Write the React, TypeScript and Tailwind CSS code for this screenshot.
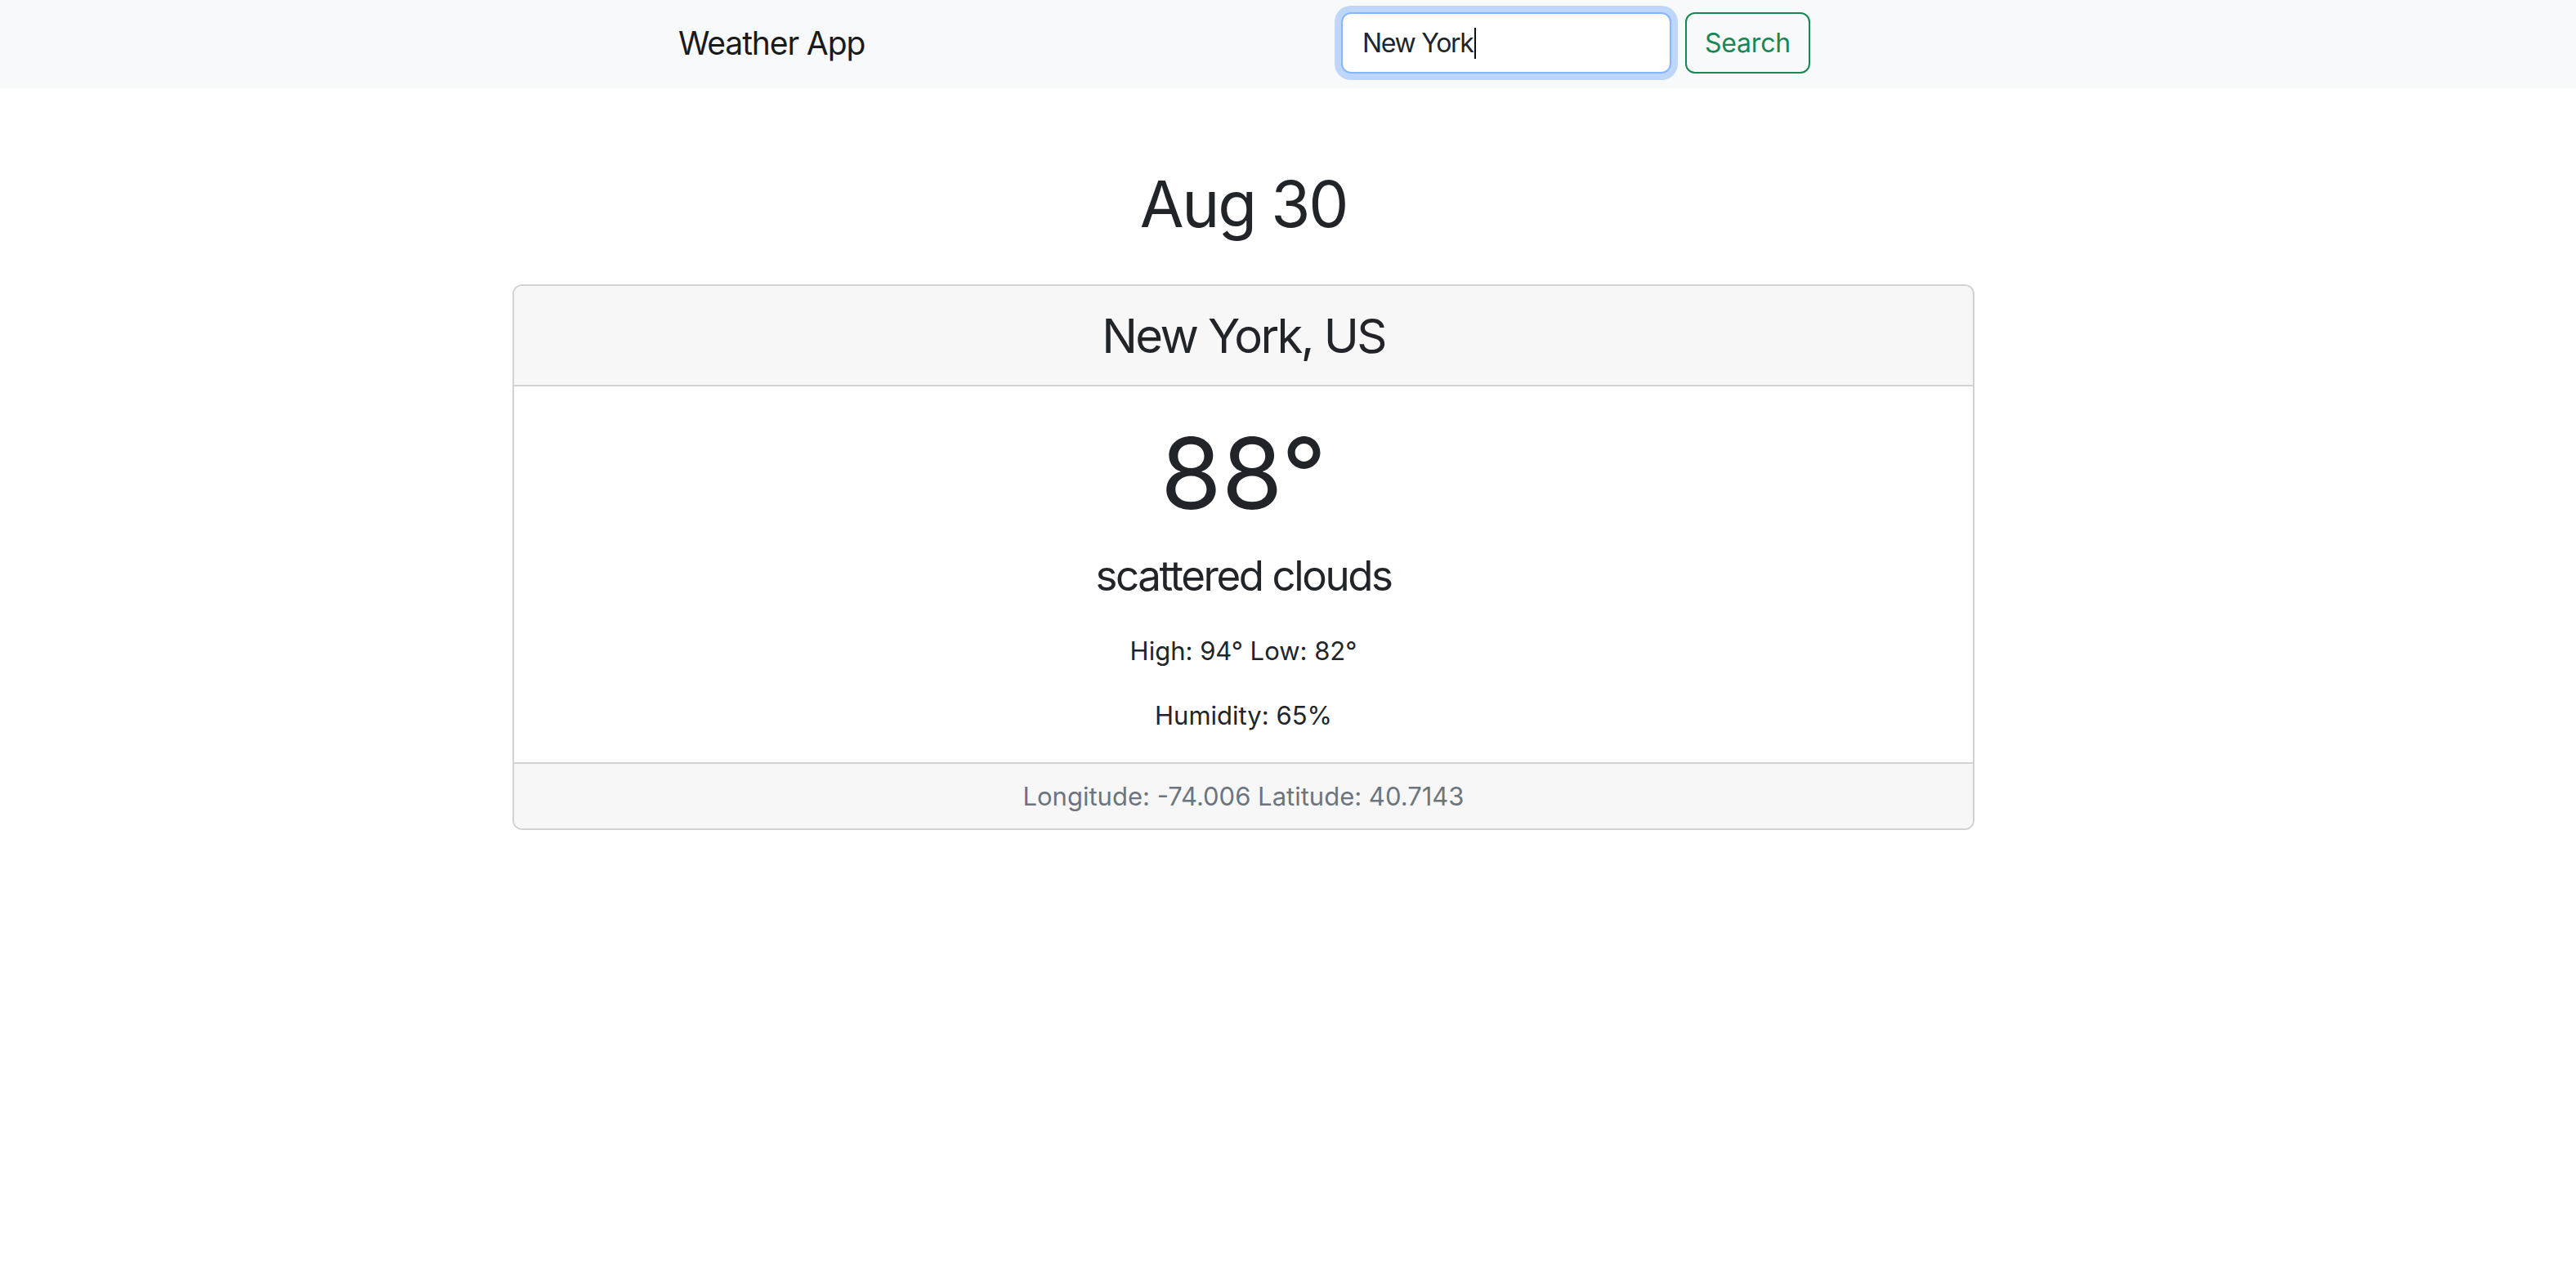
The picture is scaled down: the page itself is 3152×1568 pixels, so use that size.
import React from "react";

export default function App() {
  return (
    <div
      className="min-h-screen w-full bg-white text-[#212529]"
      style={{ fontFamily: "Inter, 'Noto Sans', sans-serif" }}
    >
      <nav className="flex h-[108px] items-start bg-[#f8f9fa] pl-[830px] pt-[15px]">
        <div className="w-[811px] pt-[8px] text-[39px] leading-[60px] tracking-[-1.1px] text-[#1a1a1a]">
          Weather App
        </div>
        <form className="flex items-start gap-[17px]" onSubmit={(e) => e.preventDefault()}>
          <div className="flex h-[75px] w-[404px] items-center rounded-[12px] border-2 border-[#86b7fe] bg-white pl-[24px] text-[32px] leading-[48px] tracking-[-1.3px] text-[#212529] shadow-[0_0_0_8px_rgba(13,110,253,0.25)]">
            <span>New York</span>
            <span className="ml-[1px] inline-block h-[38px] w-[2px] bg-[#111111]" />
          </div>
          <button
            type="submit"
            className="flex h-[75px] w-[153px] items-center justify-center rounded-[12px] border-2 border-[#198754] bg-transparent text-[32px] leading-[48px] tracking-[-0.2px] text-[#198754]"
          >
            Search
          </button>
        </form>
      </nav>

      <main className="ml-[627px] flex w-[1789px] flex-col items-center pt-[95px]">
        <h1 className="mb-[51px] h-[94px] text-[78px] font-normal leading-[94px] tracking-[-2.3px]">
          Aug 30
        </h1>

        <div className="w-full overflow-hidden rounded-[12px] border-2 border-[#d2d2d2]">
          <div className="flex h-[123px] justify-center border-b-2 border-[#d2d2d2] bg-[#f7f7f7] pt-[23px]">
            <h2 className="text-[58px] font-normal leading-[77px] tracking-[-2.6px]">New York, US</h2>
          </div>

          <div className="flex flex-col items-center pb-[33px] pt-[34px]">
            <div className="text-[121px] font-normal leading-[145px]">88°</div>
            <div className="mt-[20px] text-[51px] leading-[66px] tracking-[-2.4px]">scattered clouds</div>
            <p className="mt-[35px] text-[31px] leading-[48px]">High: 94° Low: 82°</p>
            <p className="mt-[31px] text-[31px] leading-[48px]">Humidity: 65%</p>
          </div>

          <div className="flex justify-center border-t-2 border-[#d2d2d2] bg-[#f7f7f7] pb-[15px] pt-[16px]">
            <span className="text-[31px] leading-[48px] text-[#6c757d]">
              Longitude: -74.006 Latitude: 40.7143
            </span>
          </div>
        </div>
      </main>
    </div>
  );
}
